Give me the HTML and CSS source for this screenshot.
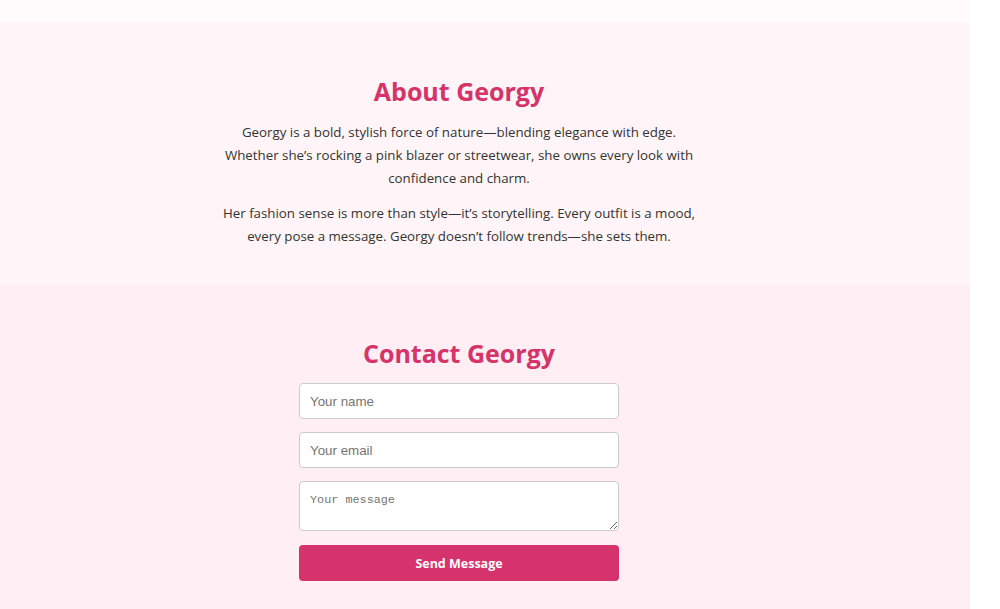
FILE: index.html
```html
<!DOCTYPE html>
<html lang="en">
<head>
<meta charset="utf-8">
<title>Georgy</title>
<link rel="stylesheet" href="styles.css">
</head>
<body>
<div class="page">
  <div class="hero-end"></div>
  <section class="about">
    <div class="inner">
      <h2 class="title">About Georgy</h2>
      <p class="text">Georgy is a bold, stylish force of nature—blending elegance with edge. Whether she’s rocking a pink blazer or streetwear, she owns every look with confidence and charm.</p>
      <p class="text">Her fashion sense is more than style—it’s storytelling. Every outfit is a mood, every pose a message. Georgy doesn’t follow trends—she sets them.</p>
    </div>
  </section>
  <section class="contact">
    <div class="inner">
      <h2 class="title">Contact Georgy</h2>
      <form class="form">
        <input class="field" type="text" placeholder="Your name">
        <input class="field" type="email" placeholder="Your email">
        <textarea class="field area" placeholder="Your message"></textarea>
        <button class="send" type="button">Send Message</button>
      </form>
    </div>
  </section>
</div>
</body>
</html>
```
FILE: styles.css
```css
html, body {
  margin: 0;
  padding: 0;
  background: #ffffff;
}
body {
  font-family: "Open Sans", "Noto Sans", sans-serif;
  color: #333333;
}
.page {
  width: 970px;
}
.hero-end {
  height: 23px;
  background: #fffafc;
}
.inner {
  width: 918px;
  display: flex;
  flex-direction: column;
  align-items: center;
}
.about {
  background: #fff5f8;
  height: 262px;
  box-sizing: border-box;
  padding-top: 52px;
}
.contact {
  background: #ffeef4;
  height: 324px;
  box-sizing: border-box;
  padding-top: 52px;
}
.title {
  margin: 0 0 14px;
  font-size: 25px;
  line-height: 32px;
  font-weight: 700;
  color: #d63369;
}
.text {
  margin: 0 0 12px;
  max-width: 490px;
  text-align: center;
  font-size: 13.3px;
  line-height: 23px;
}
.form {
  width: 320px;
  display: flex;
  flex-direction: column;
  gap: 13px;
}
.field {
  box-sizing: border-box;
  width: 320px;
  height: 36px;
  margin: 0;
  padding: 8px 10px;
  border: 1px solid #cccccc;
  border-radius: 4px;
  background: #ffffff;
  font-family: "Liberation Sans", Arial, sans-serif;
  font-size: 13.33px;
  color: #333;
}
.field::placeholder {
  color: #757575;
}
.area {
  height: 50px;
  padding-top: 11px;
  font-family: "Liberation Mono", monospace;
  font-size: 11.8px;
  resize: vertical;
}
.send {
  height: 36px;
  margin-top: 1px;
  border: none;
  border-radius: 4px;
  background: #d6336c;
  color: #ffffff;
  font-family: "Open Sans", sans-serif;
  font-weight: 700;
  font-size: 12.5px;
}
```
